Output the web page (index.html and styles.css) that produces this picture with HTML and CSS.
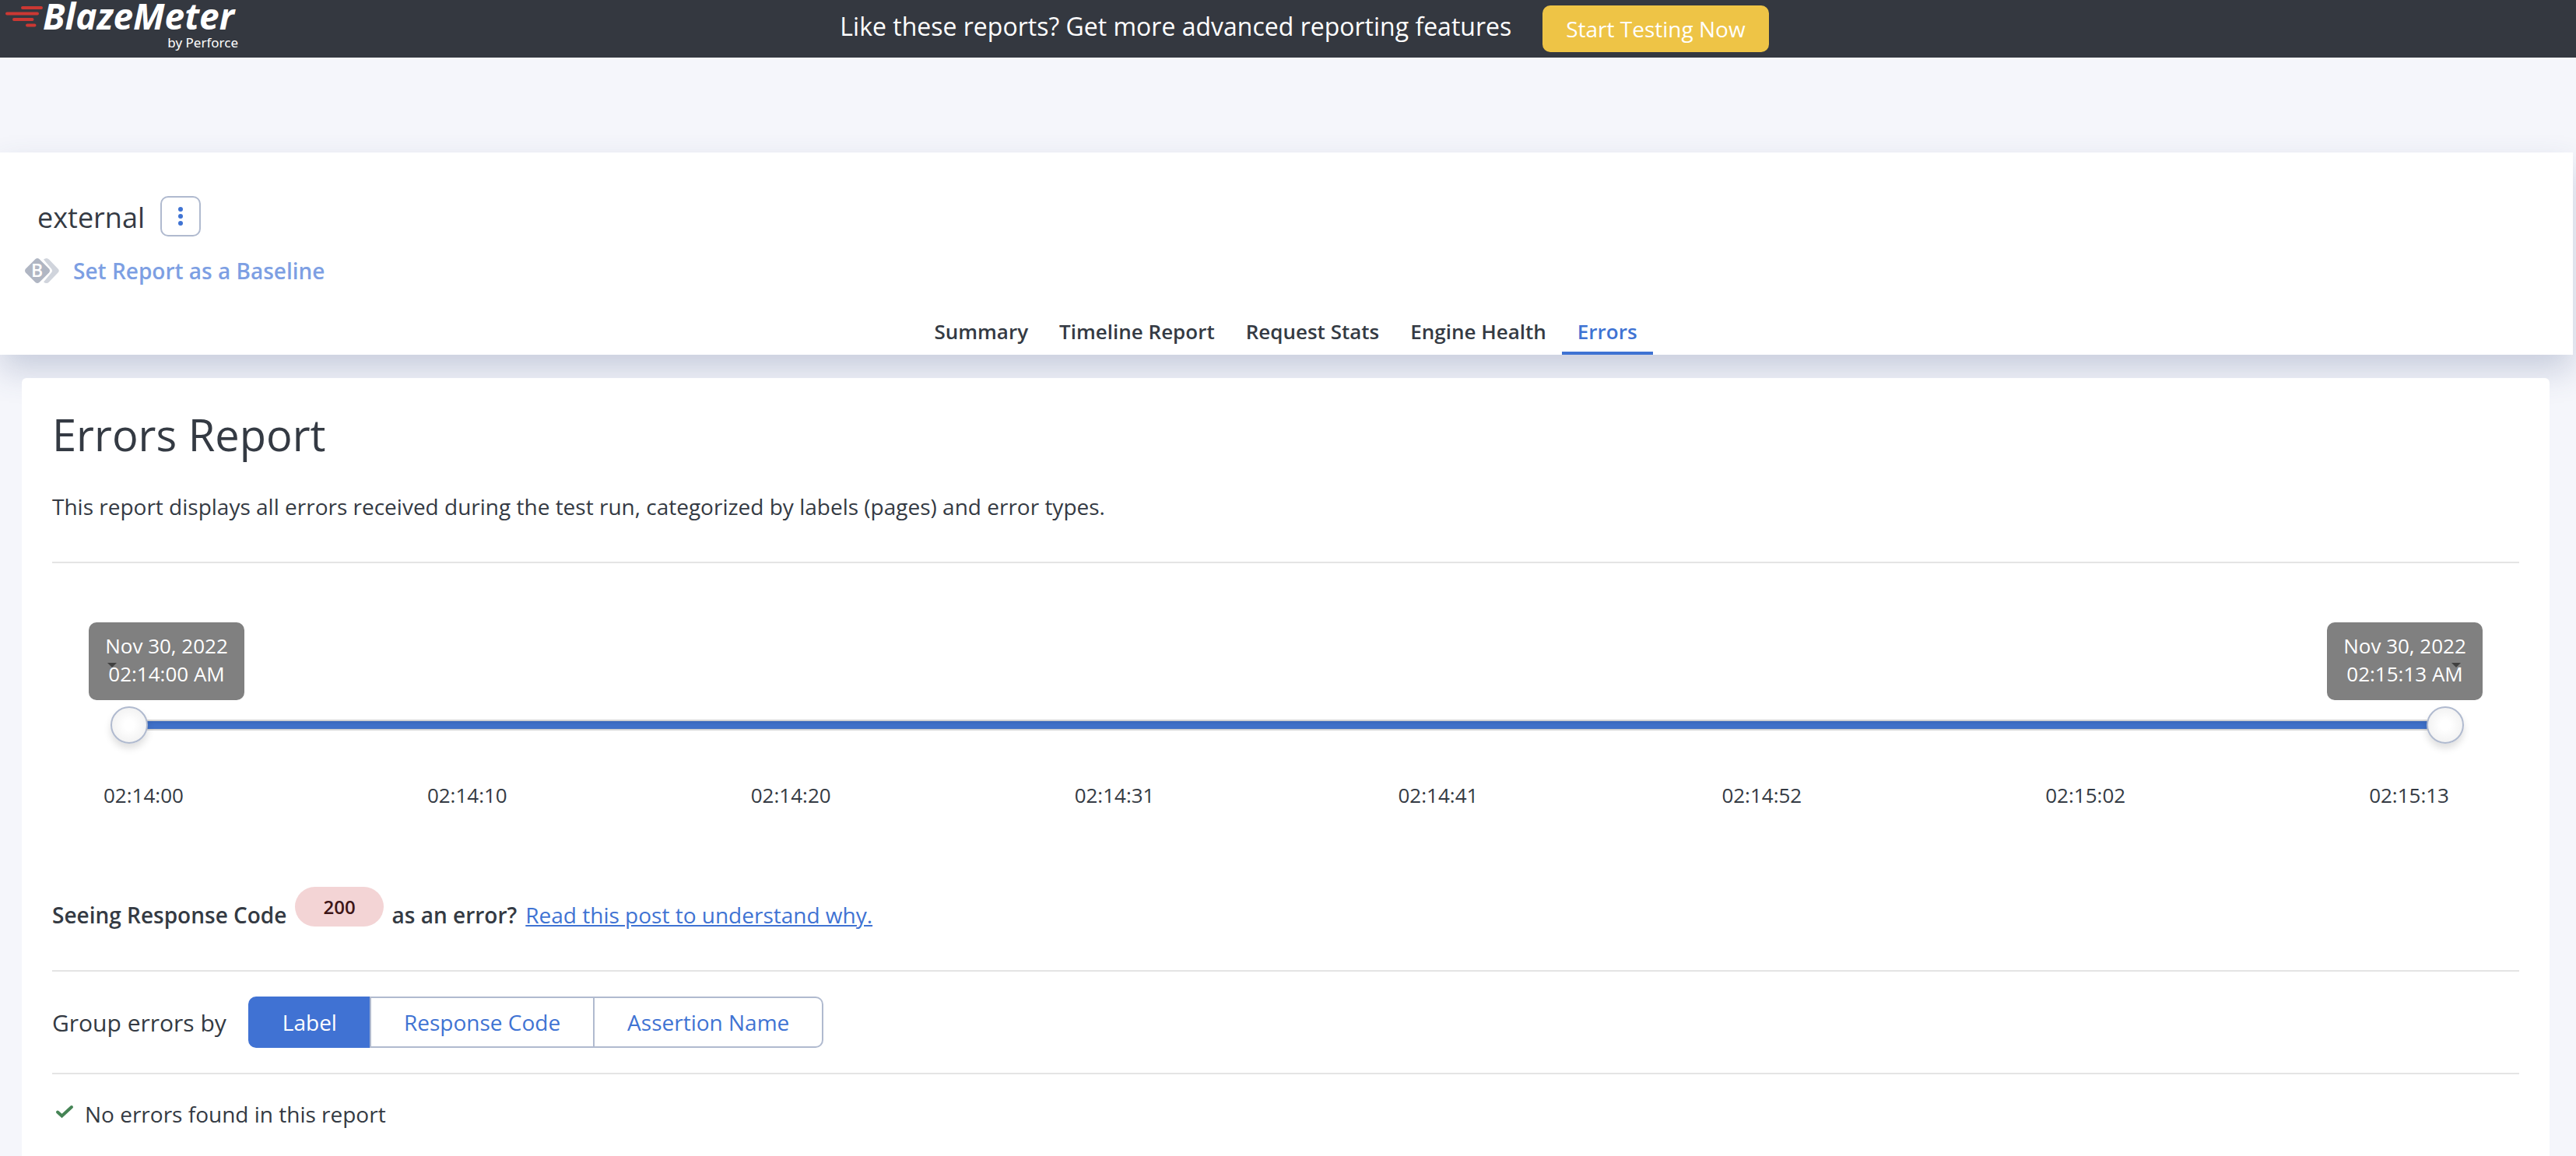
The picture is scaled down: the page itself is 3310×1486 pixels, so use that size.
FILE: index.html
```html
<!DOCTYPE html>
<html lang="en">
<head>
  <meta charset="utf-8">
  <meta name="viewport" content="width=device-width, initial-scale=1">
  <title>BlazeMeter - Errors Report</title>
  <link rel="stylesheet" href="styles.css">
</head>
<body>
  <header class="topbar">
    <a class="logo" href="#" aria-label="BlazeMeter by Perforce">
      <svg class="logo-art" viewBox="0 0 320 74" aria-hidden="true">
        <g stroke="#cb3833" stroke-width="4" stroke-linecap="round">
          <path d="M29 10H53M9 17.500H48M18 25H41.500M35 32.500H44.500"/>
        </g>
        <text class="logo-name" x="55" y="38">BlazeMeter</text>
        <text class="logo-owner" x="306" y="61" text-anchor="end">by Perforce</text>
      </svg>
    </a>
    <div class="promo">
      <span class="promo-text">Like these reports? Get more advanced reporting features</span>
      <button class="promo-button" type="button">Start Testing Now</button>
    </div>
  </header>

  <section class="report-header">
    <div class="report-title">
      <span class="report-name">external</span>
      <button class="more-button" type="button" aria-label="More actions">
        <svg width="8" height="26" viewBox="0 0 8 26" fill="#3f73d3" aria-hidden="true">
          <circle cx="4" cy="4" r="3"/><circle cx="4" cy="13" r="3"/><circle cx="4" cy="22" r="3"/>
        </svg>
      </button>
    </div>
    <a class="baseline-link" href="#">
      <svg width="44" height="32" viewBox="0 0 44 32" aria-hidden="true">
        <path d="M24 1.500Q28 -1.500 31 1.500L42.500 13.500Q45 16 42.500 18.500L31 30.500Q28 33.500 24 30.500L34 18.500Q36 16 34 13.500Z" fill="#d0d4dc"/>
        <path d="M13.500 1Q16 -1 18.500 1L31 13.500Q33 16 31 18.500L18.500 31Q16 33 13.500 31L1 18.500Q-1 16 1 13.500Z" fill="#b0b6c3"/>
        <text class="baseline-letter" x="8" y="24">B</text>
      </svg>
      Set Report as a Baseline
    </a>
    <nav class="tabs">
      <a class="tab" href="#">Summary</a>
      <a class="tab" href="#">Timeline Report</a>
      <a class="tab" href="#">Request Stats</a>
      <a class="tab" href="#">Engine Health</a>
      <a class="tab tab-active" href="#" aria-current="page">Errors</a>
    </nav>
  </section>

  <main class="report">
    <div class="intro">
      <h1>Errors Report</h1>
      <p>This report displays all errors received during the test run, categorized by labels (pages) and error types.</p>
    </div>

    <div class="time-range">
      <div class="bubbles">
        <output class="bubble bubble-start">Nov 30, 2022<br>02:14:00 AM</output>
        <output class="bubble bubble-end">Nov 30, 2022<br>02:15:13 AM</output>
      </div>
      <div class="slider">
        <div class="slider-track"></div>
        <input class="slider-input" type="range" min="0" max="73" value="0" aria-label="Start time">
        <input class="slider-input" type="range" min="0" max="73" value="73" aria-label="End time">
      </div>
      <div class="ticks">
        <span>02:14:00</span>
        <span>02:14:10</span>
        <span>02:14:20</span>
        <span>02:14:31</span>
        <span>02:14:41</span>
        <span>02:14:52</span>
        <span>02:15:02</span>
        <span>02:15:13</span>
      </div>
    </div>

    <div class="hint">
      <span class="hint-text">Seeing Response Code</span>
      <span class="code-badge">200</span>
      <span class="hint-text">as an error?</span>
      <a class="hint-link" href="#">Read this post to understand why.</a>
    </div>

    <div class="grouping">
      <span class="grouping-label" id="group-label">Group errors by</span>
      <div class="segmented" role="group" aria-labelledby="group-label">
        <button class="segment segment-active" type="button" aria-pressed="true">Label</button>
        <button class="segment" type="button" aria-pressed="false">Response Code</button>
        <button class="segment" type="button" aria-pressed="false">Assertion Name</button>
      </div>
    </div>

    <div class="empty">
      <svg class="empty-icon" width="24" height="18" viewBox="0 0 24 18" fill="none" stroke="#458455" stroke-width="4" stroke-linecap="round" aria-hidden="true">
        <path d="M3 9.500L8.500 14.500L21 3"/>
      </svg>
      <span>No errors found in this report</span>
    </div>
  </main>
</body>
</html>
```

FILE: styles.css
```css
* {
  box-sizing: border-box;
}

body {
  margin: 0;
  min-height: 100vh;
  display: flex;
  flex-direction: column;
  background: #f5f6fb;
  color: #343a43;
  font-family: "Open Sans", "Noto Sans", sans-serif;
  font-size: 28px;
  line-height: 40px;
}

a {
  color: #3f73d3;
  text-decoration: none;
}

button {
  font: inherit;
  cursor: pointer;
}

/* Top bar */

.topbar {
  display: grid;
  grid-template-columns: 320px 1fr 320px;
  height: 74px;
  background: #343840;
  color: #fff;
}

.logo-art {
  display: block;
  width: 320px;
  height: 74px;
  fill: none;
}

.logo-name {
  fill: #fff;
  font-size: 46px;
  font-style: italic;
  font-weight: 700;
}

.logo-owner {
  fill: #fff;
  font-family: "Noto Sans", sans-serif;
  font-size: 17px;
}

.promo {
  display: flex;
  justify-content: center;
  gap: 40px;
  padding-left: 42px;
}

.promo-text {
  font-size: 32px;
  line-height: 68px;
}

.promo-button {
  height: 60px;
  margin-top: 7px;
  padding: 0 30px;
  border: 0;
  border-radius: 10px;
  background: #eec446;
  color: #fff;
}

/* Report header */

.report-header {
  display: flex;
  flex-direction: column;
  align-items: flex-start;
  margin: 122px 4px 0 0;
  padding-top: 56px;
  background: #fff;
  box-shadow: 0 20px 40px rgba(60, 80, 130, 0.24);
}

.report-title {
  display: flex;
  gap: 20px;
  padding-left: 48px;
}

.report-name {
  font-size: 36px;
  line-height: 56px;
}

.more-button {
  display: grid;
  place-items: center;
  width: 52px;
  height: 52px;
  padding: 0;
  border: 2px solid #b0bacf;
  border-radius: 10px;
  background: #fff;
}

.baseline-link {
  display: flex;
  align-items: center;
  gap: 18px;
  margin-top: 20px;
  padding-left: 32px;
  color: #7d9fe3;
  font-weight: 600;
}

.baseline-letter {
  fill: #fff;
  font-size: 23px;
  font-weight: 600;
}

.tabs {
  display: flex;
  align-self: center;
  margin-top: 40px;
  padding-right: 2px;
}

.tab {
  padding: 0 20px 8px;
  border-bottom: 4px solid transparent;
  color: #343a43;
  font-size: 26px;
  font-weight: 600;
  line-height: 36px;
}

.tab-active {
  border-color: #3f73d3;
  color: #3f73d3;
}

/* Report card */

.report {
  position: relative;
  flex: 1;
  margin: 30px 34px 0 28px;
  padding: 34px 39px 32px;
  border-radius: 6px 6px 0 0;
  background: #fff;
}

.intro {
  padding-bottom: 51px;
  border-bottom: 2px solid #e4e4e4;
}

h1 {
  margin: 0;
  font-size: 56px;
  font-weight: 400;
  line-height: 76px;
}

.intro p {
  margin: 35px 0 0;
}

/* Time range */

.time-range {
  padding: 76px 47px 0;
  font-size: 26px;
  line-height: 36px;
}

.bubbles {
  display: flex;
  justify-content: space-between;
}

.bubble {
  position: relative;
  z-index: 0;
  width: 200px;
  padding: 12px 0 16px;
  border-radius: 10px;
  background: #808080;
  color: #fff;
  text-align: center;
}

.bubble::before {
  content: "";
  position: absolute;
  z-index: -1;
  top: 52px;
  border: 6px solid transparent;
  border-top-color: #404040;
}

.bubble-start::before {
  left: 24px;
}

.bubble-end::before {
  right: 28px;
}

.slider {
  display: grid;
  align-items: center;
  margin: 8px 24px 0 28px;
}

.slider-track,
.slider-input {
  grid-area: 1 / 1;
}

.slider-track {
  height: 14px;
  margin: 0 24px;
  border: solid #d3d3d3;
  border-width: 2px 0;
  background: #4071c9;
  box-shadow: inset 0 2px 4px rgba(30, 60, 120, 0.2);
}

.slider-input {
  appearance: none;
  width: 100%;
  height: 48px;
  margin: 0;
  background: transparent;
  pointer-events: none;
}

.slider-input::-webkit-slider-thumb {
  appearance: none;
  width: 48px;
  height: 48px;
  border: 2px solid #b0bacf;
  border-radius: 50%;
  background: radial-gradient(circle, #fff 20%, #f2f2f2 75%);
  box-shadow: 0 6px 10px rgba(0, 0, 0, 0.13);
  pointer-events: auto;
}

.slider-input::-moz-range-thumb {
  box-sizing: border-box;
  width: 48px;
  height: 48px;
  border: 2px solid #b0bacf;
  border-radius: 50%;
  background: #fff;
  pointer-events: auto;
}

.ticks {
  display: flex;
  justify-content: space-between;
  margin: 48px 43px 0 19px;
}

/* Response code hint */

.hint {
  display: flex;
  align-items: flex-start;
  gap: 11px;
  margin-top: 100px;
  padding-bottom: 51px;
  border-bottom: 2px solid #e4e4e4;
}

.hint-text {
  margin-top: 16px;
  font-weight: 600;
}

.hint-link {
  margin-top: 16px;
  text-decoration: underline;
}

.code-badge {
  padding: 0 36px;
  border-radius: 26px;
  background: #f3d4d5;
  color: #3d1517;
  font-size: 24px;
  font-weight: 600;
  line-height: 51px;
}

/* Grouping */

.grouping {
  display: flex;
  align-items: center;
  gap: 28px;
  padding: 32px 0;
  border-bottom: 2px solid #e4e4e4;
}

.grouping-label {
  padding-top: 2px;
  font-size: 30px;
}

.segmented {
  display: flex;
}

.segment {
  height: 66px;
  padding: 0 42px;
  border: solid #b0bacf;
  border-width: 2px 2px 2px 0;
  background: #fff;
  color: #3f73d3;
}

.segment:first-child {
  border-radius: 10px 0 0 10px;
}

.segment:last-child {
  border-radius: 0 10px 10px 0;
}

.segment-active {
  padding: 0 42px 0 44px;
  border-width: 0;
  background: #4072d3;
  color: #fff;
}

.segment-active + .segment {
  border-left-width: 2px;
}

.empty {
  display: flex;
  align-items: center;
  gap: 14px;
  margin-top: 31px;
  padding-left: 4px;
}

.empty-icon {
  margin-bottom: 6px;
}
```
